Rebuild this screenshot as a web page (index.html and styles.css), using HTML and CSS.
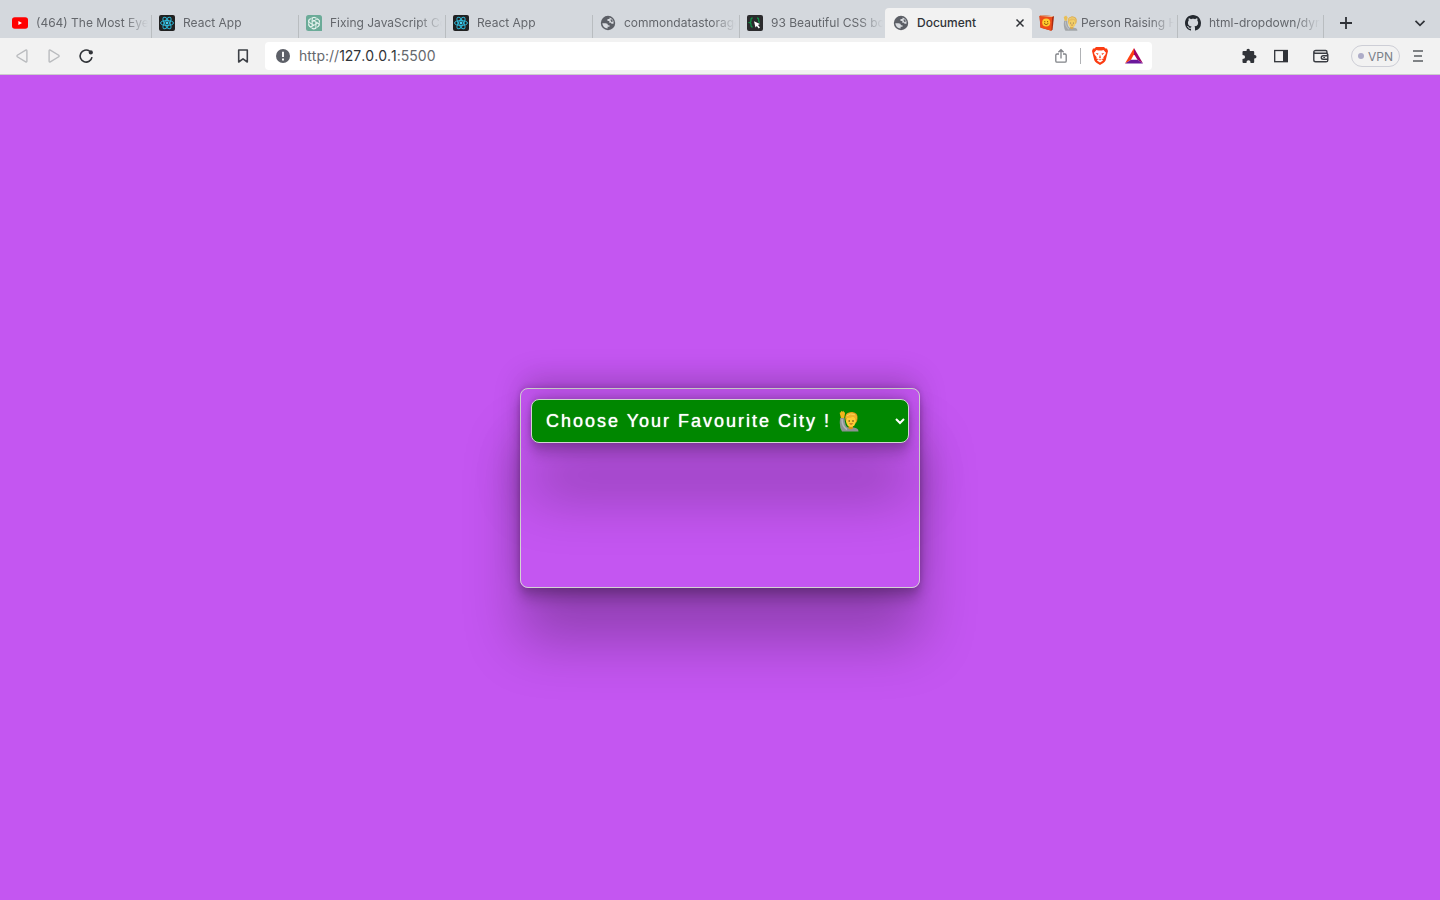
FILE: index.html
```html
<!DOCTYPE html>
<html lang="en">
<head>
<meta charset="utf-8">
<title>Document</title>
<link rel="stylesheet" href="styles.css">
</head>
<body>
<svg class="defs" aria-hidden="true">
  <symbol id="react" viewBox="0 0 16 16">
    <rect width="16" height="16" rx="2" fill="#212121"/>
    <g fill="none" stroke="#2fb6d6" stroke-width="1">
      <ellipse cx="8" cy="8" rx="6.5" ry="2.5"/>
      <ellipse cx="8" cy="8" rx="6.5" ry="2.5" transform="rotate(60 8 8)"/>
      <ellipse cx="8" cy="8" rx="6.5" ry="2.5" transform="rotate(120 8 8)"/>
    </g>
    <circle cx="8" cy="8" r="1.4" fill="#45d3f5"/>
  </symbol>
  <symbol id="globe" viewBox="0 0 16 16">
    <circle cx="8" cy="8" r="7.2" fill="#5c5f66"/>
    <path d="M2.300 8.300 H5.500 Q8 8.400 8 10.200 H9.500 V11.700 H7.600 V13.600 Q2.800 13 2.300 8.300Z M9.500 2.600 V4 H7.500 V6 H9.300 V7.800 H11.300 V8.800 H13.500 Q14.200 4.200 9.500 2.600Z" fill="#d9dce0"/>
    <path d="M10.500 4.600 H12.300 Q12.800 5.800 12.500 7 H11.200 V5.800 H10.500Z" fill="#5c5f66"/>
  </symbol>
  <symbol id="person" viewBox="0 0 20 22">
    <path d="M1.200 8 Q-.2 17 3 21.500 H19.500 Q19.500 18 14.500 17.600 H9 Q6 16.500 5.500 8 Z" fill="#8d9193"/>
    <path d="M3 9 Q3 16.500 8 19.500" fill="none" stroke="#b3b6b8" stroke-width="1.500"/>
    <path d="M2 8 L.8 3.400 Q.6 2 1.800 2.500 L2.400 .8 L3.400 1.800 L4.400 .8 L5 2.300 Q6.300 2 6 3.500 L5.200 8 Z" fill="#f2b41c"/>
    <path d="M9.500 15 h4.500 v3.300 q-2.300 1.700-4.500 0z" fill="#d89212"/>
    <path d="M6.500 10 Q5.500 3.500 10 2.600 Q11 1.600 13.500 2 Q19.200 2.600 18.500 8.500 Q18.300 11.500 17.300 12.500 H7.500Z" fill="#dc9817"/>
    <ellipse cx="12" cy="11.300" rx="4.900" ry="5.600" fill="#ffcb35"/>
    <path d="M6.600 9 Q6 4 10.500 3 Q16 1.500 18 6.500 Q18.400 8.500 17 10 Q16.500 8 14.300 6.500 Q11 8.300 7.800 8 Z" fill="#efb32a"/>
    <path d="M7.800 5.800 Q11.500 2.800 16 4.800" fill="none" stroke="#f9cf55" stroke-width="1"/>
    <circle cx="10.200" cy="11" r=".8" fill="#573713"/>
    <circle cx="14" cy="11" r=".8" fill="#573713"/>
    <path d="M10 13.500 Q12.100 15.600 14.200 13.500Z" fill="#9e3f1c"/>
  </symbol>
</svg>

<header class="browser">
  <nav class="tabs" aria-label="Open tabs">
    <div class="tab">
      <svg class="icon" viewBox="0 0 16 16"><rect y="2.2" width="16" height="11.6" rx="2.8" fill="#f00"/><path d="M6.4 6 L10 8 L6.4 10Z" fill="#fff"/></svg>
      <button class="title">(464) The Most Eye Catching</button>
    </div>
    <div class="tab">
      <svg class="icon"><use href="#react"/></svg>
      <button class="title">React App</button>
    </div>
    <div class="tab">
      <svg class="icon" viewBox="0 0 16 16"><path d="M2.5 0 H13.5 Q16 0 16 2.5 V16 H2.5 Q0 16 0 13.5 V2.5 Q0 0 2.5 0Z" fill="#6bab98"/>
        <g fill="none" stroke="#e9f5f1" stroke-width="1" stroke-linejoin="round">
          <path id="petal" d="M6.1 7 V4.3 Q6.1 2.3 8 2.3 Q9 2.3 9.8 3.1 M6.1 4.8 L8 5.8 L10.8 4.2 Q12.4 3.5 13.3 5.2 Q13.8 6.1 13.4 7.2"/>
          <use href="#petal" transform="rotate(120 8 8)"/><use href="#petal" transform="rotate(240 8 8)"/>
          <path d="M8 5.8 L9.9 6.9 V9.1 L8 10.2 L6.1 9.1 V6.9Z"/>
          <circle cx="8" cy="8" r="5.5" stroke-width=".7"/>
        </g></svg>
      <button class="title">Fixing JavaScript Code</button>
    </div>
    <div class="tab">
      <svg class="icon"><use href="#react"/></svg>
      <button class="title">React App</button>
    </div>
    <div class="tab">
      <svg class="icon"><use href="#globe"/></svg>
      <button class="title">commondatastorage.google</button>
    </div>
    <div class="tab">
      <svg class="icon" viewBox="0 0 16 16"><rect width="16" height="16" rx="2" fill="#2b2b2d"/><path d="M5.6 3 Q3.900 3 4 5 Q4.200 7.300 2.800 7.700 Q4.200 8.100 4 10 Q3.900 12 5.600 12 M10 3 Q11.700 3 11.600 5 Q11.500 7 12.800 7.700" fill="none" stroke="#119347" stroke-width="1.3"/><path d="M7 6.3 L13 9.1 L11 10 L13 12.6 L11.7 13.5 L9.8 11 L8.5 12.4Z" fill="#fff"/></svg>
      <button class="title">93 Beautiful CSS box-shadow</button>
    </div>
    <div class="tab active">
      <svg class="icon"><use href="#globe"/></svg>
      <button class="title" aria-current="page">Document</button>
      <button class="close" aria-label="Close tab"><svg class="cross" viewBox="0 0 10 10"><path d="M1.5 1.5 L8.5 8.5 M8.5 1.5 L1.5 8.5" stroke="#303338" stroke-width="1.5"/></svg></button>
    </div>
    <div class="tab">
      <svg class="icon" viewBox="0 0 16 16"><path d="M.5 1 L2.5 0 L15 1.2 L13.6 14.2 L12.4 15.8 L1.5 12.5Z" fill="#a92c10"/><path d="M.5 1 L13.2 2 L12.4 15.8 L1.5 12.7Z" fill="#ee4c1a"/><path d="M1 .9 L2.5 .2 L14.6 1.3 L13.2 2Z" fill="#f5d3ac"/><circle cx="7.2" cy="7.5" r="4" fill="#ffce2e"/><circle cx="5.8" cy="6.7" r=".6" fill="#8b4a0c"/><circle cx="8.6" cy="6.7" r=".6" fill="#8b4a0c"/><path d="M5 8.4 Q7.2 11 9.4 8.4" fill="none" stroke="#8b4a0c" stroke-width=".9"/></svg>
      <button class="title"><svg class="mini-person"><use href="#person"/></svg>Person Raising Hand</button>
    </div>
    <div class="tab">
      <svg class="icon" viewBox="0 0 16 16"><path fill="#24292f" d="M8 0C3.58 0 0 3.58 0 8c0 3.54 2.29 6.53 5.47 7.59.4.07.55-.17.55-.38 0-.19-.01-.82-.01-1.49-2.01.37-2.53-.49-2.69-.94-.09-.23-.48-.94-.82-1.13-.28-.15-.68-.52-.01-.53.63-.01 1.08.58 1.23.82.72 1.21 1.87.87 2.33.66.07-.52.28-.87.51-1.07-1.78-.2-3.64-.89-3.64-3.95 0-.87.31-1.59.82-2.15-.08-.2-.36-1.02.08-2.12 0 0 .67-.21 2.2.82.64-.18 1.32-.27 2-.27s1.36.09 2 .27c1.53-1.04 2.2-.82 2.2-.82.44 1.1.16 1.92.08 2.12.51.56.82 1.27.82 2.15 0 3.07-1.87 3.75-3.65 3.95.29.25.54.73.54 1.48 0 1.07-.01 1.93-.01 2.2 0 .21.15.46.55.38A8.01 8.01 0 0 0 16 8c0-4.42-3.58-8-8-8Z"/></svg>
      <button class="title">html-dropdown/dynamic</button>
    </div>
    <button class="new-tab" aria-label="New tab"><svg class="icon" viewBox="0 0 16 16"><path d="M8 2 V14 M2 8 H14" stroke="#2e3136" stroke-width="1.8"/></svg></button>
    <button class="tab-list" aria-label="Search tabs"><svg class="icon" viewBox="0 0 16 16"><path d="M3.5 5.8 L8 10.3 L12.5 5.8" fill="none" stroke="#303338" stroke-width="1.7"/></svg></button>
  </nav>

  <div class="toolbar">
    <div class="nav-buttons">
      <button aria-label="Back"><svg class="icon" viewBox="0 0 16 16"><path d="M3.300 7.200 Q2.500 8 3.300 8.800 L11.700 13.800 Q12.900 14.400 12.900 13.100 V2.900 Q12.900 1.600 11.700 2.200 Z" fill="none" stroke="#b9bbbe" stroke-width="1.4"/></svg></button>
      <button aria-label="Forward"><svg class="icon" viewBox="0 0 16 16"><path d="M12.700 7.200 Q13.500 8 12.700 8.800 L4.300 13.800 Q3.100 14.400 3.100 13.100 V2.900 Q3.100 1.600 4.300 2.200 Z" fill="none" stroke="#b9bbbe" stroke-width="1.4"/></svg></button>
      <button aria-label="Reload"><svg class="icon" viewBox="0 0 16 16"><path d="M11.6 3.2 A6 6 0 1 0 14 9.2" fill="none" stroke="#303338" stroke-width="1.6"/><circle cx="12.8" cy="4.4" r="2.1" fill="#303338"/></svg></button>
      <button class="bookmark" aria-label="Bookmark this page"><svg class="icon" viewBox="0 0 16 16"><path d="M3.7 2 H12.3 V14 L8 10.8 L3.7 14Z" fill="none" stroke="#3d4046" stroke-width="1.6" stroke-linejoin="round"/></svg></button>
    </div>
    <div class="address">
      <svg class="icon" viewBox="0 0 16 16"><circle cx="8" cy="8" r="7" fill="#5d6068"/><path d="M8 3.8 V8.9 M8 10.5 V12.4" stroke="#fff" stroke-width="1.9"/></svg>
      <a class="url" href="http://127.0.0.1:5500">http://<span class="host">127.0.0.1</span>:5500</a>
      <button aria-label="Share"><svg class="icon" viewBox="0 0 16 16"><path d="M6 6 H4 Q2.8 6 2.8 7.2 V13 Q2.8 14.2 4 14.2 H12 Q13.2 14.2 13.2 13 V7.2 Q13.2 6 12 6 H10 M8 10.5 V2 M5.4 4.3 L8 1.7 L10.6 4.3" fill="none" stroke="#808388" stroke-width="1.3"/></svg></button>
      <span class="divider"></span>
      <button class="shield" aria-label="Brave Shields"><svg class="badge" viewBox="0 0 18 20"><path d="M5 1 H13 L14.5 2.6 L16 2.5 L17 5 L16.5 7 L14.7 14.2 Q14 16 12.3 17 L9 19 L5.700 17 Q4 16 3.300 14.2 L1.5 7 L1 5 L2 2.500 L3.500 2.600Z" fill="#fb3c12"/><path d="M5.500 4 L7.300 4.500 H10.700 L12.500 4 L15 6.800 L14.400 8.500 L12.300 11.300 L12.700 12.500 L10.800 13 L12 14.600 L9 16.500 L6 14.600 L7.200 13 L5.300 12.500 L5.700 11.300 L3.600 8.500 L3 6.800Z" fill="#fff"/><path d="M4.600 7 L7.500 7.500 L6.800 9Z M13.400 7 L10.500 7.500 L11.200 9Z M9 8.500 L9.900 11.500 L9 12.500 L8.100 11.500Z M6.800 12.700 L9 13.600 L11.200 12.700 L9 14.600Z" fill="#fb3c12"/></svg></button>
      <button class="rewards" aria-label="Brave Rewards"><svg class="badge" viewBox="0 0 18 18"><path d="M9 1 L0 16.500 L6 12.800 L9 7.300Z" fill="#ff4012"/><path d="M9 1 L18 16.500 L12.500 12.800 L9 7.300Z" fill="#a30065"/><path d="M0 16.500 H18 L12.500 12.800 H6Z" fill="#6b189b"/></svg></button>
    </div>
    <div class="actions">
      <button aria-label="Extensions"><svg class="icon" viewBox="0 0 16 16"><path d="M1.500 4 Q1.500 3 2.500 3 H5.500 Q5.300 .8 7.200 .8 Q9.100 .8 8.900 3 H12.200 Q13.200 3 13.200 4 V7 Q15.500 6.800 15.500 8.700 Q15.500 10.600 13.200 10.400 V14 Q13.200 15 12.200 15 H9.500 Q9.600 12.300 7.500 12.300 Q5.400 12.300 5.500 15 H2.500 Q1.500 15 1.500 14 V11 Q4.100 11 4.100 9 Q4.100 7 1.500 7Z" fill="#303338"/></svg></button>
      <button aria-label="Sidebar"><svg class="icon" viewBox="0 0 16 16"><rect x="1.700" y="2.500" width="12.600" height="11.200" fill="none" stroke="#303338" stroke-width="1.300"/><path d="M10 2 H15 V14 H10Z" fill="#303338"/></svg></button>
      <button aria-label="Wallet"><svg class="icon" viewBox="0 0 16 16"><path d="M14 5.200 V3.900 Q14 2.500 12.600 2.500 H2.800 Q.8 2.500 .8 4.300 V12 Q.8 13.800 2.600 13.800 H13 Q14.800 13.800 14.800 12.200 V7 Q14.800 5.200 13 5.200 H2.500 Q.8 5.200 .8 3.800 M14.800 7.700 H10.200 Q8.300 7.700 8.300 9.500 Q8.300 11.300 10.200 11.300 H14.800" fill="none" stroke="#3a3d43" stroke-width="1.400"/><path d="M10.300 9.500 H12" stroke="#3a3d43"/></svg></button>
      <button class="vpn"><span class="dot"></span>VPN</button>
      <button aria-label="Menu"><svg class="icon" viewBox="0 0 16 16"><path d="M3 3 H13 M4 8 H12 M3 13 H13" stroke="#5a5d62" stroke-width="1.700"/></svg></button>
    </div>
  </div>
</header>

<main class="page">
  <section class="card">
    <label class="hidden-label" for="city">City</label>
    <select id="city" class="city">
      <option>Choose Your Favourite City !</option>
    </select>
    <svg class="emoji"><use href="#person"/></svg>
  </section>
</main>
</body>
</html>
```
FILE: styles.css
```css
* {
  box-sizing: border-box;
}

body {
  margin: 0;
  min-height: 100vh;
  display: flex;
  flex-direction: column;
  font-family: Inter, "Liberation Sans", sans-serif;
  background: #c456f1;
}

button {
  border: 0;
  padding: 0;
  background: none;
  font: inherit;
  color: inherit;
}

svg {
  display: block;
  flex: none;
}

.defs {
  position: absolute;
  width: 0;
  height: 0;
}

.icon {
  width: 16px;
  height: 16px;
}

/* Tab strip */
.tabs {
  display: flex;
  padding: 8px 12px 0 5px;
  background: #d4d8dd;
}

.tab {
  flex: 0 1 147px;
  min-width: 0;
  height: 30px;
  display: flex;
  align-items: center;
  gap: 8px;
  padding: 0 4px 0 7px;
  font-size: 12px;
  color: #64676c;
  background: linear-gradient(#b9bdc0, #b9bdc0) right bottom / 1px 23px no-repeat;
}

.tab.active {
  margin-left: -2px;
  padding: 0 7px 0 8px;
  border-radius: 4px 4px 0 0;
  background: #f2f2f2;
  color: #303338;
  font-weight: 500;
}

.active ~ .tab {
  flex-basis: 146px;
}

.title {
  flex: 1;
  min-width: 0;
  display: flex;
  align-items: center;
  gap: 3px;
  overflow: hidden;
  white-space: nowrap;
  line-height: 20px;
  mask-image: linear-gradient(to left, transparent, #000 24px);
}

.active .title {
  mask-image: none;
}

.mini-person {
  width: 15px;
  height: 16px;
  opacity: 0.7;
}

.cross {
  width: 10px;
  height: 10px;
}

.new-tab {
  margin-left: 14px;
}

.tab-list {
  margin-left: auto;
}

/* Toolbar */
.toolbar {
  display: flex;
  align-items: center;
  height: 37px;
  background: #f2f2f2;
  border-bottom: 1px solid #ccc;
}

.nav-buttons {
  flex: none;
  width: 265px;
  display: flex;
  gap: 16px;
  padding: 0 14px;
}

.bookmark {
  margin-left: auto;
}

.address {
  flex: 1;
  height: 28px;
  display: flex;
  align-items: center;
  padding: 0 9px 0 10px;
  border-radius: 4px;
  background: #fff;
}

.url {
  flex: 1;
  margin-left: 8px;
  font-size: 14px;
  line-height: 16px;
  font-kerning: none;
  font-feature-settings: "calt" 0;
  color: #65686d;
  text-decoration: none;
}

.host {
  color: #303338;
}

.divider {
  width: 1px;
  height: 16px;
  margin: 0 10px 0 11px;
  background: #b0b2b5;
}

.badge {
  width: 18px;
  height: 20px;
}

.rewards {
  margin-left: 16px;
}

.actions {
  flex: none;
  width: 288px;
  display: flex;
  align-items: center;
  justify-content: flex-end;
  gap: 16px;
  padding-right: 14px;
}

.actions button:nth-child(3) {
  margin-left: 8px;
}

.vpn {
  display: flex;
  align-items: center;
  gap: 4px;
  height: 22px;
  margin: 0 -6px 0 6px;
  padding: 0 6px;
  border: 1px solid #cdced6;
  border-radius: 11px;
  font-size: 12px;
  color: #7a8088;
}

.dot {
  width: 6px;
  height: 6px;
  border-radius: 50%;
  background: #adacc8;
}

/* Page */
.page {
  flex: 1;
  display: flex;
  align-items: center;
  justify-content: center;
}

.card,
.city {
  border: 1px solid #d3d3d3;
  border-radius: 8px;
  box-shadow:
    rgba(0, 0, 0, 0.25) 0 54px 55px,
    rgba(0, 0, 0, 0.12) 0 -12px 30px,
    rgba(0, 0, 0, 0.12) 0 4px 6px,
    rgba(0, 0, 0, 0.17) 0 12px 13px,
    rgba(0, 0, 0, 0.09) 0 -3px 5px;
}

.card {
  position: relative;
  width: 400px;
  max-width: 100%;
  min-height: 200px;
  padding: 10px;
}

.city {
  display: block;
  width: 100%;
  min-height: 44px;
  padding: 10px;
  background-color: #008700;
  color: #fff;
  font-family: "Liberation Sans", Arial, sans-serif;
  font-size: 18px;
  letter-spacing: 2px;
  text-shadow: 0 0 1px #fff;
}

.emoji {
  position: absolute;
  left: 318px;
  top: 21px;
  width: 20px;
  height: 22px;
  pointer-events: none;
}

.hidden-label {
  position: absolute;
  width: 1px;
  height: 1px;
  overflow: hidden;
  clip-path: inset(50%);
}
```
